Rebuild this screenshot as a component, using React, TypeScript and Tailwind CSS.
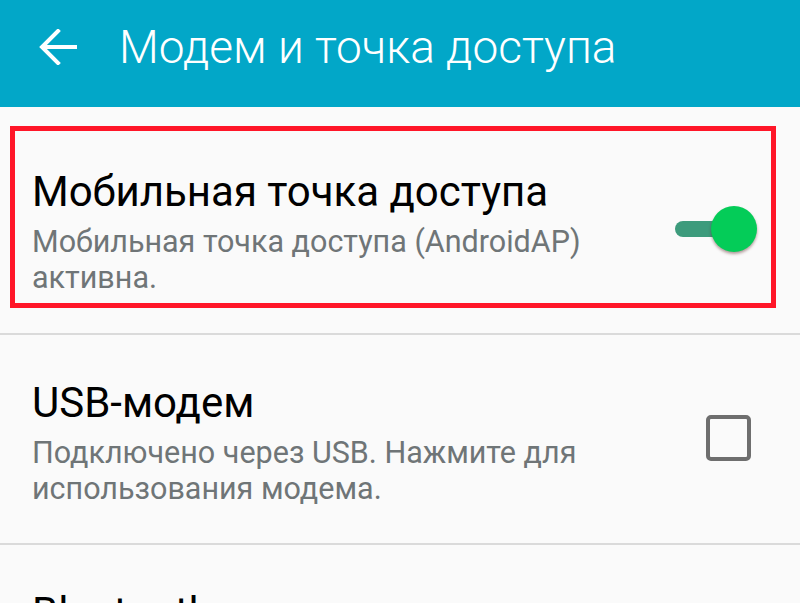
import React from "react";

const FONT = { fontFamily: "Roboto, 'Noto Sans', sans-serif" };

function BackArrow() {
  return (
    <svg width="38" height="36" viewBox="0 0 38 36" fill="none" className="text-white">
      <path d="M36 18H4M19 2 3 18l16 16" stroke="currentColor" strokeWidth="4" strokeLinecap="square" />
    </svg>
  );
}

function Toggle() {
  return (
    <div className="relative h-[48px] w-[82px]">
      <div className="absolute left-0 top-[16px] h-[16px] w-[50px] rounded-full bg-[#3d9b7c]" />
      <div className="absolute right-0 top-[1px] h-[46px] w-[46px] rounded-full bg-[#04cc58] shadow-[0_2px_3px_rgba(90,40,40,0.45)]" />
    </div>
  );
}

function Checkbox() {
  return <div className="h-[46px] w-[45px] rounded-[5px] border-[4px] border-[#6e6e6e]" />;
}

export default function App() {
  return (
    <div className="h-[603px] w-[800px] overflow-hidden bg-[#fafafa]" style={FONT}>
      {/* App bar */}
      <header className="flex h-[107px] items-center bg-[#02a7c8] pb-[14px] pl-[39px]">
        <BackArrow />
        <h1 className="ml-[42px] text-[46px] font-light leading-none text-white">Модем и точка доступа</h1>
      </header>

      {/* Mobile hotspot, highlighted */}
      <div className="pb-[25px] pl-[10px] pr-[24px] pt-[19px]">
        <div className="flex h-[182px] items-start justify-between border-[5px] border-[#ff1628] pl-[17px] pr-[14px] pt-[37px]">
          <div>
            <div className="text-[42px] leading-[48px] text-black">Мобильная точка доступа</div>
            <div className="mt-[8px] text-[30.5px] leading-[36px] text-[#6f7577]">
              Мобильная точка доступа (AndroidAP)
              <br />
              активна.
            </div>
          </div>
          <div className="mt-[37px]">
            <Toggle />
          </div>
        </div>
      </div>
      <div className="h-[2px] bg-[#dadada]" />

      {/* USB tethering */}
      <div className="flex h-[208px] items-start justify-between pl-[32px] pr-[49px] pt-[44px]">
        <div>
          <div className="text-[42px] leading-[48px] text-black">USB-модем</div>
          <div className="mt-[8px] text-[30.5px] leading-[36px] text-[#6f7577]">
            Подключено через USB. Нажмите для
            <br />
            использования модема.
          </div>
        </div>
        <div className="mt-[36px]">
          <Checkbox />
        </div>
      </div>
      <div className="h-[2px] bg-[#dadada]" />

      {/* Bluetooth tethering, cut off by the screen edge */}
      <div className="pl-[32px] pt-[44px]">
        <div className="text-[42px] leading-[48px] text-black">Bluetooth-модем</div>
      </div>
    </div>
  );
}
